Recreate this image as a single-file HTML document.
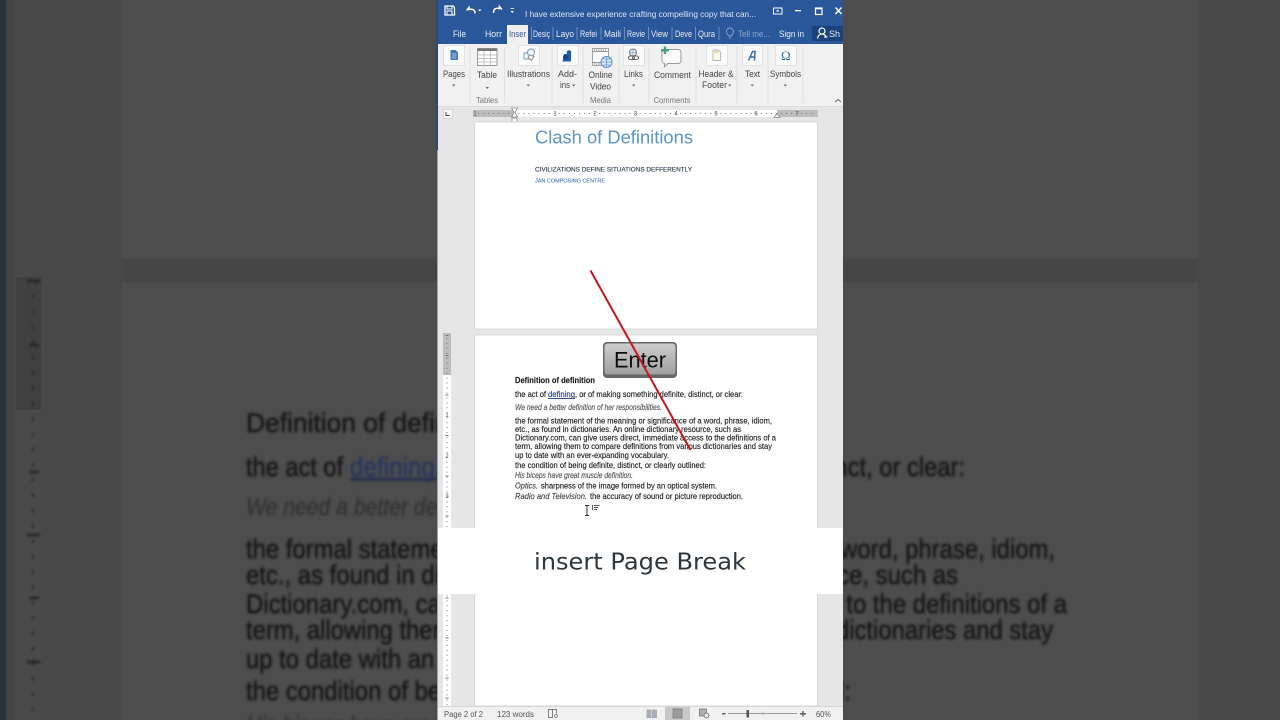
<!DOCTYPE html>
<html lang="en"><head><meta charset="utf-8"><title>insert Page Break</title>
<style>
html,body{margin:0;padding:0;width:1280px;height:720px;overflow:hidden;background:#484848}
svg{display:block}
text{font-family:"Liberation Sans",sans-serif}
</style></head><body>
<svg xmlns="http://www.w3.org/2000/svg" width="1280" height="720" viewBox="0 0 1280 720">
<defs>
<filter id="b2" x="-5%" y="-5%" width="110%" height="110%"><feGaussianBlur stdDeviation="1.4"/></filter>
<filter id="b0" x="-2%" y="-2%" width="104%" height="104%"><feGaussianBlur stdDeviation="0.38"/></filter>
<linearGradient id="key" x1="0" y1="0" x2="0" y2="1"><stop offset="0" stop-color="#cdcdcd"/><stop offset="1" stop-color="#a0a0a0"/></linearGradient>
</defs>

<!-- blurred backdrop -->
<g>
<rect width="1280" height="720" fill="#484848"/>
<rect x="0" width="6" height="720" fill="#2b3238"/>
<rect x="6" width="8" height="720" fill="#414548"/>
<rect x="122" y="0" width="1076" height="259" fill="#4d4d4d"/>
<rect x="122" y="259" width="1076" height="23" fill="#464646"/>
<rect x="122" y="283" width="1076" height="437" fill="#4d4d4d"/>
<rect x="16" y="277" width="25" height="133" fill="#404040"/>
<rect x="16" y="410" width="25" height="310" fill="#4a4a4a"/>
<g filter="url(#b2)">
<line x1="33" y1="280" x2="33" y2="720" stroke="#222" stroke-width="2" stroke-dasharray="2.5 12.8"/>
<path d="M27 281h13M29 345h10M29 472h10M27 535h13M29 598h10M27 662h13" stroke="#222" stroke-width="2.5"/>
<g fill="#161616" stroke="#161616" stroke-width=".5" font-size="27">
<text x="246" y="432" textLength="252" lengthAdjust="spacingAndGlyphs">Definition of definition</text>
<text x="246" y="476" textLength="97" lengthAdjust="spacingAndGlyphs">the act of</text>
<text x="350" y="476" fill="#26345e" stroke="#26345e" textLength="85" lengthAdjust="spacingAndGlyphs">defining</text>
<rect x="351" y="478" width="85" height="2.5" fill="#26345e"/>
<text x="436" y="476" textLength="529" lengthAdjust="spacingAndGlyphs">, or of making something definite, distinct, or clear:</text>
<text x="246" y="515" font-style="italic" font-size="24" fill="#333" stroke="#333" textLength="463" lengthAdjust="spacingAndGlyphs">We need a better definition of her responsibilities.</text>
<text x="246" y="558" textLength="809" lengthAdjust="spacingAndGlyphs">the formal statement of the meaning or significance of a word, phrase, idiom,</text>
<text x="246" y="584" textLength="712" lengthAdjust="spacingAndGlyphs">etc., as found in dictionaries. An online dictionary resource, such as</text>
<text x="246" y="613" textLength="821" lengthAdjust="spacingAndGlyphs">Dictionary.com, can give users direct, immediate access to the definitions of a</text>
<text x="246" y="639" textLength="807" lengthAdjust="spacingAndGlyphs">term, allowing them to compare definitions from various dictionaries and stay</text>
<text x="246" y="668" textLength="486" lengthAdjust="spacingAndGlyphs">up to date with an ever-expanding vocabulary.</text>
<text x="246" y="700" textLength="605" lengthAdjust="spacingAndGlyphs">the condition of being definite, distinct, or clearly outlined:</text>
<text x="246" y="733" font-style="italic" font-size="24" fill="#333" stroke="#333" textLength="372" lengthAdjust="spacingAndGlyphs">His biceps have great muscle definition.</text>
</g>
</g>
</g>

<!-- Word window -->
<g filter="url(#b0)">
<rect x="436.5" y="0" width="2" height="150" fill="#22457f"/>
<rect x="437" y="150" width="1.5" height="570" fill="#9aa3ad"/>
<rect x="438" y="0" width="405" height="720" fill="#e6e6e6"/>
<!-- title bar -->
<rect x="438" y="0" width="405" height="44" fill="#2b579a"/>
<g fill="none" stroke="#fff" stroke-width="1.3">
<path d="M445 6h8l1.500 1.500V15H445z"/><path d="M447 6v3h5V6M447 15v-4h5v4" stroke-width="1"/>
<path d="M466.500 10.500l2.500-3v2c4-1 6 .5 6 4" stroke-width="1.500"/>
<path d="M502 9.500l-2.500-3v2c-4-1-6 .5-6 4.500" stroke-width="1.500"/>
</g>
<g fill="#fff">
<path d="M478 9.500h3.500l-1.750 2zM510.500 11h3.500l-1.750 2zM510.500 8h3.500v.8h-3.500z"/>
<text x="525" y="17" font-size="8.600" fill="#dfe6f2" textLength="231" lengthAdjust="spacingAndGlyphs">I have extensive experience crafting compelling copy that can...</text>
<rect x="795" y="10" width="6" height="1.300"/>
</g>
<rect x="773.500" y="8" width="8.500" height="6" fill="none" stroke="#fff" stroke-width="1"/>
<path d="M776 11.500h3.500l-1.750-2z" fill="#fff"/>
<rect x="815.500" y="8" width="6.500" height="6.500" fill="none" stroke="#fff" stroke-width="1.200"/><rect x="815" y="7.500" width="7.500" height="1.800" fill="#fff"/>
<path d="M835.500 7.500l6 6.500M841.500 7.500l-6 6.500" stroke="#fff" stroke-width="1.400"/>
<!-- tabs -->
<rect x="812" y="26" width="31" height="15" fill="#1f437c"/>
<rect x="507" y="25" width="21" height="19" fill="#f1f1f1"/>
<g font-size="8.800" fill="#e8edf5">
<text x="453" y="37" textLength="13" lengthAdjust="spacingAndGlyphs">File</text>
<text x="485" y="37" textLength="17" lengthAdjust="spacingAndGlyphs">Horr</text>
<text x="509" y="37" fill="#2b579a" textLength="17" lengthAdjust="spacingAndGlyphs">Inser</text>
<text x="533" y="37" textLength="17" lengthAdjust="spacingAndGlyphs">Desiç</text>
<text x="556" y="37" textLength="18" lengthAdjust="spacingAndGlyphs">Layo</text>
<text x="580" y="37" textLength="17" lengthAdjust="spacingAndGlyphs">Refei</text>
<text x="604" y="37" textLength="17" lengthAdjust="spacingAndGlyphs">Maili</text>
<text x="627" y="37" textLength="18" lengthAdjust="spacingAndGlyphs">Revie</text>
<text x="651" y="37" textLength="17" lengthAdjust="spacingAndGlyphs">View</text>
<text x="675" y="37" textLength="17" lengthAdjust="spacingAndGlyphs">Deve</text>
<text x="698" y="37" textLength="17" lengthAdjust="spacingAndGlyphs">Qura</text>
<text x="738" y="37" fill="#90a8cc" textLength="32" lengthAdjust="spacingAndGlyphs">Tell me...</text>
<text x="779" y="37" textLength="25" lengthAdjust="spacingAndGlyphs">Sign in</text>
<text x="829" y="37" textLength="11" lengthAdjust="spacingAndGlyphs">Sh</text>
</g>
<path d="M531.500 27v13M553 27v13M577 27v13M601 27v13M624.500 27v13M648.500 27v13M672 27v13M695.500 27v13M719 27v13" stroke="#7f9cc7" stroke-width=".8"/>
<path d="M729 36c-2-2-2.500-3-2.500-4.500a3.500 3.500 0 0 1 7 0c0 1.500-.5 2.500-2.500 4.500zM729 38h2" fill="none" stroke="#90a8cc" stroke-width=".9"/>
<circle cx="822" cy="31" r="3" fill="none" stroke="#fff" stroke-width="1.200"/>
<path d="M817.500 38.500c.5-3 2.500-4.500 4.500-4.500s3.500 1 4.500 3.500M824 37h3.500" fill="none" stroke="#fff" stroke-width="1.200"/>
<!-- ribbon -->
<rect x="438" y="44" width="405" height="63" fill="#f1f1f1"/>
<rect x="438" y="106" width="405" height="1" fill="#dcdcdc"/>
<path d="M470 47v56M504.500 47v56M552 47v56M583 47v56M619 47v56M649 47v56M696 47v56M737 47v56M768 47v56M803 47v56" stroke="#e0e0e0" stroke-width="1"/>
<g fill="#fbfbfb" stroke="#e2e2e2" stroke-width="1">
<rect x="443.500" y="45.500" width="21" height="20"/><rect x="518.500" y="45.500" width="21" height="20"/>
<rect x="557.500" y="45.500" width="21" height="20"/><rect x="623.500" y="45.500" width="21" height="20"/>
<rect x="706.500" y="45.500" width="21" height="20"/><rect x="742.500" y="45.500" width="20" height="20"/>
<rect x="775.500" y="45.500" width="21" height="20"/>
</g>
<!-- Pages -->
<path d="M450.500 50h5l2.500 2.500V60h-7.500z" fill="#3f76b8"/><path d="M452 54h4.500M452 56h4.500M452 58h4.500" stroke="#cfe0f2" stroke-width=".7"/>
<!-- Table -->
<rect x="477.500" y="48.500" width="19.500" height="17" fill="#fff" stroke="#9a9a9a"/>
<rect x="477.500" y="48.500" width="19.500" height="2.500" fill="#777"/>
<path d="M477.500 55h19.500M477.500 58.500h19.500M477.500 62h19.500M484 51v14.500M490.500 51v14.500" stroke="#b4b4b4" stroke-width=".8"/>
<!-- Illustrations -->
<rect x="524" y="53" width="6" height="6" fill="none" stroke="#6f9bc9" stroke-width="1"/>
<circle cx="531" cy="52.500" r="3.500" fill="#f3f6fa" stroke="#6f9bc9" stroke-width="1"/>
<path d="M529.500 55l4.500 1.500-2.500 4-3.500-3z" fill="#f3f6fa" stroke="#8a8a8a" stroke-width=".9"/>
<!-- Add-ins -->
<path d="M564 54h3v-2h4v9.500h-8.500z" fill="#1d5fa8"/><circle cx="569" cy="52.500" r="2.300" fill="#1d5fa8"/><circle cx="565.500" cy="57" r="2.500" fill="#15478a"/>
<!-- Online Video -->
<rect x="592.500" y="48.500" width="16" height="17" fill="#fbfbfb" stroke="#a4a4a4"/>
<path d="M592.500 51.500h16M592.500 62.500h10" stroke="#999" stroke-width="1"/>
<path d="M594 50h13M594 64h8" stroke="#777" stroke-width="1" stroke-dasharray="1.200 1"/>
<circle cx="606.500" cy="62" r="5.500" fill="#dbe8f6" stroke="#5b92cf" stroke-width="1"/>
<path d="M601 62h11M606.500 56.500v11M603 58.500c2 1 5 1 7 0M603 65.500c2-1 5-1 7 0" fill="none" stroke="#5b92cf" stroke-width=".7"/>
<!-- Links -->
<circle cx="633" cy="52.500" r="3.500" fill="#eef1f5" stroke="#777" stroke-width="1"/>
<path d="M629.500 52.500h7M633 49v7" stroke="#7f9fc6" stroke-width=".7"/>
<rect x="628.500" y="56" width="6" height="3.500" rx="1.700" fill="none" stroke="#666" stroke-width="1.100"/>
<rect x="632.500" y="56" width="6" height="3.500" rx="1.700" fill="none" stroke="#666" stroke-width="1.100"/>
<!-- Comment -->
<path d="M664 49.500h14a3 3 0 0 1 3 3v8a3 3 0 0 1-3 3h-10l-3.500 3v-3a3 3 0 0 1-2.500-3v-8a3 3 0 0 1 2.500-3z" fill="#fbfbfb" stroke="#999"/>
<path d="M665 46.500v7.500M661 50.300h8" stroke="#4f9d80" stroke-width="2.400"/>
<!-- Header -->
<path d="M713 50h5.500l2 2v8.500H713z" fill="#fffbe8" stroke="#b4b4b4" stroke-width=".9"/><rect x="714" y="51" width="4.500" height="2" fill="#ecd9a0"/>
<!-- Text -->
<path d="M748.500 60.500l4-9h2.500l-.5 9M750 57h4.500" fill="none" stroke="#2f6db3" stroke-width="1.500"/>
<!-- Symbols -->
<text x="781" y="60" font-size="13" style="font-family:'Liberation Serif',serif" fill="#2f6db3">Ω</text>
<g font-size="8.800" fill="#444" text-anchor="middle">
<text x="454" y="77" textLength="22" lengthAdjust="spacingAndGlyphs">Pages</text>
<text x="487" y="78" textLength="20" lengthAdjust="spacingAndGlyphs">Table</text>
<text x="528.500" y="77" textLength="43" lengthAdjust="spacingAndGlyphs">Illustrations</text>
<text x="567.500" y="77" textLength="19" lengthAdjust="spacingAndGlyphs">Add-</text>
<text x="565" y="88" textLength="10" lengthAdjust="spacingAndGlyphs">ins</text>
<text x="600.500" y="78" textLength="24" lengthAdjust="spacingAndGlyphs">Online</text>
<text x="600.500" y="89.500" textLength="21" lengthAdjust="spacingAndGlyphs">Video</text>
<text x="633.500" y="77" textLength="19" lengthAdjust="spacingAndGlyphs">Links</text>
<text x="672.500" y="78" textLength="37" lengthAdjust="spacingAndGlyphs">Comment</text>
<text x="716" y="77" textLength="35" lengthAdjust="spacingAndGlyphs">Header &amp;</text>
<text x="714.500" y="88" textLength="25" lengthAdjust="spacingAndGlyphs">Footer</text>
<text x="752.500" y="77" textLength="15" lengthAdjust="spacingAndGlyphs">Text</text>
<text x="785.500" y="77" textLength="31" lengthAdjust="spacingAndGlyphs">Symbols</text>
<g font-size="8" fill="#777">
<text x="487" y="103" textLength="22" lengthAdjust="spacingAndGlyphs">Tables</text>
<text x="600.500" y="103" textLength="21" lengthAdjust="spacingAndGlyphs">Media</text>
<text x="672" y="103" textLength="37" lengthAdjust="spacingAndGlyphs">Comments</text>
</g></g>
<path d="M452 84.500h3.500l-1.750 2zM485.500 87h3.500l-1.750 2zM526.500 84.500h3.500l-1.750 2zM572 84.500h3.500l-1.750 2zM632 84.500h3.500l-1.750 2zM728 84.500h3.500l-1.750 2zM750.500 84.500h3.500l-1.750 2zM783.500 84.500h3.500l-1.750 2z" fill="#666"/>
<path d="M835 102l3-2.500 3 2.500" fill="none" stroke="#666" stroke-width="1"/>
<!-- h ruler -->
<rect x="438" y="107" width="405" height="15" fill="#e6e6e6"/>
<rect x="443.500" y="109.500" width="9" height="9" fill="#f7f7f7" stroke="#d8d8d8"/>
<path d="M446 112v3.500h3.500" fill="none" stroke="#444" stroke-width="1"/>
<rect x="473" y="110" width="345" height="7" fill="#fff"/>
<rect x="473" y="110" width="41" height="7" fill="#bdbdbd"/><rect x="777" y="110" width="41" height="7" fill="#bdbdbd"/>
<line x1="478" y1="113.500" x2="815" y2="113.500" stroke="#777" stroke-width="1" stroke-dasharray="1 4.050"/>
<g font-size="6" fill="#555" text-anchor="middle">
<text x="475" y="115.500">1</text><text x="555" y="115.500">1</text><text x="595" y="115.500">2</text><text x="635.500" y="115.500">3</text><text x="676" y="115.500">4</text><text x="716" y="115.500">5</text><text x="756" y="115.500">6</text><text x="797" y="115.500">7</text>
</g>
<path d="M511.500 108h6l-2.500 4.500 2.500 4.500h-6l2.500-4.500z" fill="#fff" stroke="#8a8a8a" stroke-width=".8"/>
<rect x="512" y="118" width="5" height="4" fill="#fff" stroke="#8a8a8a" stroke-width=".8"/>
<path d="M774 117.500l3-4 3 4z" fill="#fff" stroke="#8a8a8a" stroke-width=".8"/>
<!-- pages -->
<rect x="474.500" y="122" width="343" height="207" fill="#fff" stroke="#dadada"/>
<rect x="474.500" y="335" width="343" height="371" fill="#fff" stroke="#dadada"/>
<text x="535" y="143.500" font-size="18.500" fill="#5b96c4" textLength="158" lengthAdjust="spacingAndGlyphs">Clash of Definitions</text>
<text x="535" y="171.500" font-size="6" fill="#2a3650" stroke="#2a3650" stroke-width=".12" textLength="157" lengthAdjust="spacingAndGlyphs">CIVILIZATIONS DEFINE SITUATIONS DEFFERENTLY</text>
<text x="535" y="182.500" font-size="5" fill="#3f74b8" stroke="#3f74b8" stroke-width=".08" textLength="70" lengthAdjust="spacingAndGlyphs">JAN COMPOSING CENTRE</text>
<!-- v ruler -->
<rect x="443" y="333" width="8" height="42" fill="#bdbdbd"/>
<rect x="443" y="375" width="8" height="331" fill="#fff"/>
<line x1="447" y1="338" x2="447" y2="706" stroke="#777" stroke-width="1" stroke-dasharray="1 3.950"/>
<path d="M445.500 335.500h3M445.500 355.500h3M445.500 395h3M445.500 435.500h3M445.500 476h3M445.500 516h3M445.500 598h3M445.500 638h3M445.500 678h3M445.500 698h3" stroke="#777" stroke-width="1"/>
<g font-size="6" fill="#555" text-anchor="middle"><text x="447" y="417">1</text><text x="447" y="458">2</text><text x="447" y="498">3</text></g>
<!-- doc text -->
<g font-size="8.600" fill="#1c1c1c" stroke="#1c1c1c" stroke-width=".14">
<text x="515" y="383" font-weight="bold" textLength="80" lengthAdjust="spacingAndGlyphs">Definition of definition</text>
<text x="515" y="397" textLength="31" lengthAdjust="spacingAndGlyphs">the act of</text>
<text x="548" y="397" fill="#25408f" stroke="#25408f" textLength="27" lengthAdjust="spacingAndGlyphs">defining</text>
<rect x="548" y="398" width="27" height=".9" fill="#25408f" stroke="none"/>
<text x="575" y="397" textLength="168" lengthAdjust="spacingAndGlyphs">, or of making something definite, distinct, or clear:</text>
<text x="515" y="410" font-size="7.800" font-style="italic" fill="#555" stroke="#555" textLength="147" lengthAdjust="spacingAndGlyphs">We need a better definition of her responsibilities.</text>
<text x="515" y="423.500" textLength="257" lengthAdjust="spacingAndGlyphs">the formal statement of the meaning or significance of a word, phrase, idiom,</text>
<text x="515" y="432" textLength="226" lengthAdjust="spacingAndGlyphs">etc., as found in dictionaries. An online dictionary resource, such as</text>
<text x="515" y="440.500" textLength="261" lengthAdjust="spacingAndGlyphs">Dictionary.com, can give users direct, immediate access to the definitions of a</text>
<text x="515" y="449" textLength="257" lengthAdjust="spacingAndGlyphs">term, allowing them to compare definitions from various dictionaries and stay</text>
<text x="515" y="458" textLength="154" lengthAdjust="spacingAndGlyphs">up to date with an ever-expanding vocabulary.</text>
<text x="515" y="468" textLength="191" lengthAdjust="spacingAndGlyphs">the condition of being definite, distinct, or clearly outlined:</text>
<text x="515" y="478" font-size="7.800" font-style="italic" fill="#555" stroke="#555" textLength="118" lengthAdjust="spacingAndGlyphs">His biceps have great muscle definition.</text>
<text x="515" y="488.500" font-style="italic" fill="#444" stroke="#444" textLength="23" lengthAdjust="spacingAndGlyphs">Optics.</text>
<text x="541" y="488.500" textLength="176" lengthAdjust="spacingAndGlyphs">sharpness of the image formed by an optical system.</text>
<text x="515" y="499" font-style="italic" fill="#444" stroke="#444" textLength="72" lengthAdjust="spacingAndGlyphs">Radio and Television.</text>
<text x="590" y="499" textLength="153" lengthAdjust="spacingAndGlyphs">the accuracy of sound or picture reproduction.</text>
</g>
<path d="M585 505.500h4M585 515.500h4M587 505.500v10" stroke="#333" stroke-width="1" fill="none"/>
<path d="M592.500 505v5M594 505.500h5.500M594 507.500h4M594 509.500h3" stroke="#555" stroke-width="1"/>
<!-- status bar -->
<rect x="438" y="706" width="405" height="14" fill="#f1f1f1"/>
<rect x="438" y="706" width="405" height="1" fill="#d6d6d6"/>
<rect x="665" y="707" width="25" height="13" fill="#c8c8c8"/>
<g font-size="7.800" fill="#555">
<text x="444" y="717" textLength="39" lengthAdjust="spacingAndGlyphs">Page 2 of 2</text>
<text x="497" y="717" textLength="37" lengthAdjust="spacingAndGlyphs">123 words</text>
<text x="816" y="717" textLength="15" lengthAdjust="spacingAndGlyphs">60%</text>
</g>
<path d="M548.500 709.500h4v8h-4zM552.500 709.500h4v4" fill="none" stroke="#777" stroke-width=".9"/>
<circle cx="556" cy="716" r="1.500" fill="none" stroke="#777" stroke-width=".8"/>
<path d="M646.500 709.500h5v8.500h-5zM652 709.500h5v8.500h-5z" fill="#a8aeb3"/>
<rect x="673" y="709" width="9" height="9" fill="#9c9c9c" stroke="#7d7d7d" stroke-width=".8"/>
<rect x="699.500" y="709" width="7" height="7" fill="#b0b0b0" stroke="#777" stroke-width=".8"/><circle cx="706.500" cy="715.500" r="2.500" fill="#eee" stroke="#666" stroke-width=".8"/>
<path d="M728 713.500h69" stroke="#999" stroke-width="1"/>
<path d="M722 713.800h3.500M800 713.800h6M803 711v5.500" stroke="#555" stroke-width="1.300"/>
<rect x="746.500" y="710" width="2.500" height="7.500" fill="#555"/>
<line x1="763" y1="711.500" x2="763" y2="715.500" stroke="#aaa" stroke-width=".8"/>
<!-- Enter key -->
<rect x="603" y="342" width="74" height="36" rx="4" fill="#666"/>
<rect x="604.500" y="343.500" width="71" height="31" rx="3" fill="url(#key)"/>
<text x="640" y="367.500" font-size="22" fill="#0c0c0c" text-anchor="middle" textLength="52" lengthAdjust="spacingAndGlyphs">Enter</text>
<!-- red arrow -->
<line x1="590.500" y1="270.500" x2="690.500" y2="450" stroke="#c9161c" stroke-width="2"/>
</g>
<!-- caption band -->
<rect x="438" y="528" width="405" height="66" fill="#fff"/>
<text x="534" y="569.500" font-size="23" fill="#2e373d" textLength="212" lengthAdjust="spacingAndGlyphs" style="font-family:'DejaVu Sans',sans-serif">insert Page Break</text>
</svg>
</body></html>
